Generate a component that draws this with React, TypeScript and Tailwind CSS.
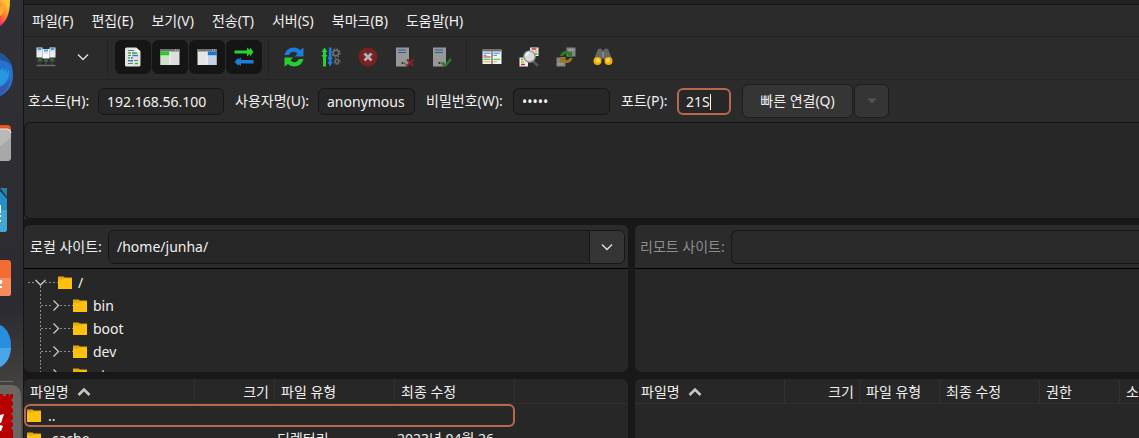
import type { ReactNode } from "react";

const Icon = ({ children, className = "" }: { children: ReactNode; className?: string }) => (
  <svg viewBox="0 0 20 20" aria-hidden="true" className={"h-5 w-5 shrink-0 " + className}>
    {children}
  </svg>
);

const ServerBody = () => (
  <>
    <path d="M1 0.500H14V17l-2 2.500H1z" fill="#979797" />
    <path d="M3 3h8M3 5.500h8" stroke="#2a5f9e" strokeWidth="1.200" />
    <path d="M9 15.500l3 3.500" stroke="#666" strokeWidth="1.500" />
    <circle cx="7.500" cy="16" r="1" fill="#222" />
  </>
);

const SiteManagerIcon = () => (
  <Icon>
    <path d="M0.500 0.500h6v10h-6zM13.500 0.500h6v10h-6z" fill="#e9edf1" />
    <path d="M6.500 2h7v9.500h-7z" fill="#fff" />
    <path d="M1.500 2h4M14.500 2h4M8 3.500h4" stroke="#4b9be0" strokeWidth="1.800" />
    <path d="M1.500 4h3M14.500 4h3M8 6h4" stroke="#b9c4d0" />
    <path d="M4 11v3M10 12v6M16 11v3M1 14h6M8 14h4M13 14h6" stroke="#565656" />
    <path d="M2 12.500h4M8 13.500h4M14 12.500h4" stroke="#2c7c32" strokeWidth="1.500" />
    <path d="M4 14v4M16 14v4" stroke="#444" />
    <path d="M0.500 18.500h19" stroke="#6b6b6b" strokeWidth="1.500" />
  </Icon>
);

const LogIcon = () => (
  <Icon>
    <path d="M4 0.500h9l4.500 4V18a1.500 1.500 0 0 1-1.500 1.500H3.500A1.500 1.500 0 0 1 2 18V2A1.500 1.500 0 0 1 3.500 0.500z" fill="#e4e4e4" />
    <path d="M13 0.500v4h4.500z" fill="#fff" />
    <path d="M5 3.500h6M5 8.500h3M11 13.500h4M5 16.500h5" stroke="#777" strokeWidth="1.200" />
    <path d="M5 6h3M11 6h3M5 11h2M12 16.500h3" stroke="#23c52a" strokeWidth="1.500" />
    <path d="M9 6h2M9.500 8.500H15M5 13.800h5M8 11h2" stroke="#397fc0" strokeWidth="1.500" />
  </Icon>
);

const LocalTreeIcon = () => (
  <Icon>
    <path d="M0.500 2h19v16H0.500z" fill="#ddd" />
    <path d="M0.500 2h19v2.500H0.500z" fill="#737373" />
    <path d="M17 2.500h1v1h-1zM15 2.500h1v1h-1z" fill="#ccc" />
    <path d="M0.500 4.500h9v4h-9z" fill="#24cd2b" />
    <path d="M0.500 8.500h9V18h-9z" fill="#cce3ca" />
    <path d="M10 4.500V18" stroke="#f5f5f5" />
  </Icon>
);

const RemoteTreeIcon = () => (
  <Icon>
    <path d="M0.500 2h19v16H0.500z" fill="#e5e5e5" />
    <path d="M0.500 2h19v2.500H0.500z" fill="#737373" />
    <path d="M17 2.500h1v1h-1zM15 2.500h1v1h-1z" fill="#ccc" />
    <path d="M10.500 4.500h9v4h-9z" fill="#1976d2" />
    <path d="M10.500 8.500h9V18h-9z" fill="#c4d3e3" />
    <path d="M10 4.500V18" stroke="#f7f7f7" />
  </Icon>
);

const QueueIcon = () => (
  <Icon>
    <path d="M0.500 3.500H13V0.500L16 3V0.500L19.500 5 16 9.300V7l-3 2.300V6.500H0.500z" fill="#27d32f" />
    <path d="M19.500 13H7v-2.500L4.500 12.500V10.500L0.500 15l4 4v-2l2.500 2v-2.500h12.500z" fill="#1b7ddc" />
  </Icon>
);

const RefreshIcon = () => (
  <Icon>
    <path d="M0.500 8C1.500 3.500 5 0.500 9.800 0.500c2.700 0 4.600 0.900 6.200 2.500l3.500-2.500V9.500H11l2.500-3C10.500 3.700 6.500 4.500 5 8z" fill="#1b7ddc" />
    <path d="M19.500 12c-1 4.500-4.500 7.500-9.300 7.500-2.700 0-4.600-0.900-6.200-2.500L0.500 19.500v-9H9l-2.500 3c3 2.800 7 2 8.500-1.500z" fill="#27cf2e" />
  </Icon>
);

const ProcessIcon = () => (
  <Icon>
    <path d="M3.500 0.500L6.500 5H5v3h1.500L5 10.500v9H2v-9L0.500 8H2V5H0.500z" fill="#27d32f" />
    <path d="M9 19.500L6.500 15h1.300v-3H6.500L7.800 9V0.500h2.700V9l1.300 3h-1.300v3h1.300z" fill="#1b7ddc" />
    <circle cx="15" cy="6" r="2.700" fill="none" stroke="#707070" strokeWidth="1.500" />
    <circle cx="15" cy="6" r="4" fill="none" stroke="#707070" strokeWidth="1.500" strokeDasharray="1.500 1.640" />
    <circle cx="16" cy="14.500" r="1.800" fill="none" stroke="#707070" strokeWidth="1.300" />
    <circle cx="16" cy="14.500" r="2.900" fill="none" stroke="#707070" strokeWidth="1.200" strokeDasharray="1.140 1.140" />
  </Icon>
);

const CancelIcon = () => (
  <Icon>
    <circle cx="10" cy="10" r="9.500" fill="#782224" />
    <path d="M6.500 6.500l7 7M13.500 6.500l-7 7" stroke="#b8b0b0" strokeWidth="2.800" />
  </Icon>
);

const DisconnectIcon = () => (
  <Icon>
    <ServerBody />
    <path d="M12 12.500l6.500 6.500M18.500 12.500L12 19" stroke="#852428" strokeWidth="2.200" />
  </Icon>
);

const ReconnectIcon = () => (
  <Icon>
    <ServerBody />
    <path d="M10.500 15.500l3 3L19 12" fill="none" stroke="#287f2d" strokeWidth="2.400" />
  </Icon>
);

const FilterIcon = () => (
  <Icon>
    <path d="M0.500 3h19v14H0.500z" fill="#f4f4f4" />
    <path d="M0.500 2h19v2.500H0.500z" fill="#727272" />
    <path d="M1.500 6.200h7M11.500 6.200H18M1.500 8.300h3M11.500 8.300H15" stroke="#348bd9" />
    <path d="M1.500 10h7" stroke="#c52332" />
    <path d="M1.500 12.300h7M11.500 12.300H18" stroke="#28c733" />
    <path d="M1.500 14.800h7M11.500 14.800H15" stroke="#e5ad22" />
    <path d="M10 4.500V17" stroke="#555" strokeWidth="1.200" />
  </Icon>
);

const SearchFilesIcon = () => (
  <Icon>
    <path d="M11 0.500h8.500V9H11zM0.500 10.500H9v9H0.500z" fill="#f2f2f2" />
    <path d="M12.500 2h5M2 17.500h4" stroke="#d12d37" strokeWidth="1.300" />
    <path d="M16 4.500h2.500M2 15h3" stroke="#e7a728" strokeWidth="1.300" />
    <path d="M16 7h2.500M2 12.500h2" stroke="#36b93c" strokeWidth="1.300" />
    <path d="M14 14l5 5" stroke="#555" strokeWidth="2.500" />
    <circle cx="10.500" cy="9.500" r="5.700" fill="#d9d9d9" stroke="#8e8e8e" strokeWidth="1.300" />
    <path d="M7 9a4 4 0 0 1 3-3.500" fill="none" stroke="#fafafa" strokeWidth="1.500" />
  </Icon>
);

const SyncBrowseIcon = () => (
  <Icon>
    <path d="M10.500 0.500h9v9h-9zM0.500 10.500h9v9h-9z" fill="#858585" />
    <path d="M12 3h6M2 17h5" stroke="#aaa" />
    <path d="M4 9c0.500-3 3-5 6-5 1.800 0 3 0.600 4.200 1.600L16 4v6h-5.500l1.800-2C10 6.200 7.800 7 7 9z" fill="#287c2c" />
    <path d="M16.500 11c-0.500 3-3 5-6 5-1.800 0-3-0.600-4.200-1.600L4 16v-6h6l-1.800 2c2.300 1.800 4.500 1 5.300-1z" fill="#9b7420" />
  </Icon>
);

const BinocularsIcon = () => (
  <Icon>
    <path d="M5 2l3-0.500 1.500 2h1L12 1.500l3 0.500 4 10-5 5-3-5H9l-3 5-5-5z" fill="#666" />
    <path d="M9 5h2v5H9z" fill="#858585" />
    <circle cx="4.500" cy="14" r="4" fill="#f6ad0b" />
    <circle cx="15.500" cy="14" r="4" fill="#f6ad0b" />
    <circle cx="5" cy="13.500" r="2" fill="#ffdc65" />
    <circle cx="15" cy="13.500" r="2" fill="#ffdc65" />
  </Icon>
);

const ChevronDown = () => (
  <svg viewBox="0 0 12 8" className="h-2 w-3 shrink-0" aria-hidden="true">
    <path d="M1 1.500l5 5 5-5" fill="none" stroke="#e3e3e3" strokeWidth="1.300" />
  </svg>
);

const SortUp = () => (
  <svg viewBox="0 0 14 10" className="h-[10px] w-[14px] shrink-0" aria-hidden="true">
    <path d="M1.500 8L7 2.500 12.500 8" fill="none" stroke="#c6c6c6" strokeWidth="2.600" />
  </svg>
);

const FolderIcon = () => (
  <svg viewBox="0 0 14 14" className="h-[14px] w-[14px] shrink-0" aria-hidden="true">
    <path d="M0 0.500h5.500L7 1.500h7v6H0z" fill="#e5a50f" />
    <path d="M0 3.500h5.500L7 2.500h7v10.500H0z" fill="#ffc10d" />
  </svg>
);

type Tool = { label: string; icon: ReactNode; pressed?: boolean; disabled?: boolean };

const toolGroups: Tool[][] = [
  [
    { label: "사이트 관리자", icon: <SiteManagerIcon /> },
    { label: "사이트 목록", icon: <ChevronDown /> },
  ],
  [
    { label: "메시지 로그", icon: <LogIcon />, pressed: true },
    { label: "로컬 디렉터리 트리", icon: <LocalTreeIcon />, pressed: true },
    { label: "원격 디렉터리 트리", icon: <RemoteTreeIcon />, pressed: true },
    { label: "전송 대기열", icon: <QueueIcon />, pressed: true },
  ],
  [
    { label: "새로 고침", icon: <RefreshIcon /> },
    { label: "대기열 처리", icon: <ProcessIcon /> },
    { label: "취소", icon: <CancelIcon />, disabled: true },
    { label: "연결 끊기", icon: <DisconnectIcon />, disabled: true },
    { label: "다시 연결", icon: <ReconnectIcon />, disabled: true },
  ],
  [
    { label: "필터", icon: <FilterIcon /> },
    { label: "디렉터리 비교", icon: <SearchFilesIcon /> },
    { label: "동기화 탐색", icon: <SyncBrowseIcon />, disabled: true },
    { label: "파일 검색", icon: <BinocularsIcon /> },
  ],
];

const menus = ["파일(F)", "편집(E)", "보기(V)", "전송(T)", "서버(S)", "북마크(B)", "도움말(H)"];

const DockItem = ({ label, children }: { label: string; children: ReactNode }) => (
  <button aria-label={label} className="block h-[68px] w-full shrink-0">
    <svg viewBox="0 0 23 68" className="h-[68px] w-[23px]" aria-hidden="true">
      {children}
    </svg>
  </button>
);

const Dock = () => (
  <nav aria-label="Dock" className="flex w-[23px] shrink-0 flex-col overflow-hidden bg-linear-to-b from-[#303035] via-[#2b2b30] via-70% to-[#57504b]">
    <div className="-mt-[27px] flex flex-col">
      <DockItem label="Firefox">
        <defs>
          <linearGradient id="fox" x1="0.300" y1="0" x2="0" y2="1">
            <stop offset="0.400" stopColor="#ffc42f" />
            <stop offset="0.750" stopColor="#ff6b32" />
            <stop offset="1" stopColor="#ee2778" />
          </linearGradient>
        </defs>
        <path d="M0 4h5c4 6 5 14 5 24 0 13-4 21-10 25z" fill="url(#fox)" />
        <path d="M0 34c2 0 4-2 5-5 0 9-2 13-5 14z" fill="#ffa832" />
      </DockItem>
      <DockItem label="Thunderbird">
        <path d="M0 12c8 3 13 11 13 22S8 51 0 55z" fill="#2771ce" />
        <path d="M0 12c5 2 9 6 11 12-4-4-7-4-11-5z" fill="#1e5799" />
        <path d="M0 29l3-2 1 4 2-4 1 5 2-4c1 8-2 13-9 18z" fill="#2598df" />
        <path d="M0 46c4-1 8-5 10-9-1 8-4 13-10 17z" fill="#355aaf" />
      </DockItem>
      <DockItem label="파일">
        <path d="M0 16h7q4 0 4 4v15H0z" fill="#e65326" />
        <path d="M0 20h7q4 0 4 4v24q0 4-4 4H0z" fill="#b9b9b9" />
        <path d="M0 37L11 29v19q0 4-4 4H0z" fill="#a8a8a8" />
        <path d="M0 20h7q4 0 4 4" fill="none" stroke="#e8e8e8" />
      </DockItem>
      <DockItem label="LibreOffice">
        <path d="M0 11h7v9z" fill="#2382ad" />
        <path d="M0 13l7 8v31q0 3-3 3H0z" fill="#2491c4" />
        <path d="M0 33h7v19q0 3-3 3H0z" fill="#43a7d3" />
        <path d="M0 28h1v8H0zM0 38h1v2H0zM0 43h1v2H0z" fill="#fff" />
        <path d="M0 13l7 8" stroke="#204557" strokeWidth="1.500" />
      </DockItem>
      <DockItem label="Ubuntu Software">
        <path d="M0 15h8q3 0 3 3v30q0 3-3 3H0z" fill="#f46c31" />
        <path d="M0 33h11v15q0 3-3 3H0z" fill="#f88b5c" />
        <path d="M0 35h2q1 1 0 3l-1 1H0M0 41h2v2H0z" fill="#fff" />
      </DockItem>
      <DockItem label="도움말">
        <path d="M0 12c7 3 11 11 11 21S7 51 0 54z" fill="#278ddf" />
        <path d="M0 35h11c-1 9-4 15-11 19z" fill="#49a5e8" />
      </DockItem>
      <DockItem label="FileZilla">
        <path d="M0 0.500h13" stroke="#746a65" />
        <path d="M0 4h11q10 0 10 12v52H0z" fill="#6a6664" />
        <path d="M0 13h3v2h3v-2h3v2l2-2h2v4l-2 2 2 2v3l-2 2 2 2v3l-2 2 2 2v3l-2 2 2 2v3l-2 2 2 2v16H0z" fill="#b60000" />
        <path d="M0 34l4-1-3 9H0zM0 44l3 1-2 5H0z" fill="#fff" />
      </DockItem>
    </div>
  </nav>
);

const fieldClass =
  "h-[27px] rounded-md border border-[#171717] bg-[#272727] px-2 text-sm text-[#f2f2f2] outline-none";

const Field = ({ id, label, labelClass, children }: { id: string; label: string; labelClass: string; children: ReactNode }) => (
  <div className="flex shrink-0 items-center">
    <label htmlFor={id} className={"whitespace-nowrap " + labelClass}>
      {label}
    </label>
    {children}
  </div>
);

const QuickConnect = () => (
  <form className="flex h-[43px] shrink-0 items-center gap-[11px] border-t border-[#252525] pl-1" onSubmit={(e) => e.preventDefault()}>
    <Field id="host" label="호스트(H):" labelClass="w-[70px]">
      <input id="host" defaultValue="192.168.56.100" className={fieldClass + " w-[126px]"} />
    </Field>
    <Field id="user" label="사용자명(U):" labelClass="w-[83px]">
      <input id="user" defaultValue="anonymous" className={fieldClass + " w-[97px]"} />
    </Field>
    <Field id="pass" label="비밀번호(W):" labelClass="w-[87px]">
      <input id="pass" type="password" defaultValue="guest" className={fieldClass + " w-[97px]"} />
    </Field>
    <Field id="port" label="포트(P):" labelClass="w-[56px]">
      <div className="relative">
        <input id="port" defaultValue="21S" className="h-[27px] w-[54px] rounded-md border-2 border-[#b5694f] bg-[#272727] px-[7px] text-sm text-[#f2f2f2] outline-none" />
        <span className="absolute top-[6px] left-[33px] h-4 w-px bg-white" />
      </div>
    </Field>
    <div className="flex shrink-0 gap-px">
      <button className="h-[34px] w-[111px] rounded-md border border-[#1d1d1d] bg-[#353535]">빠른 연결(Q)</button>
      <button aria-label="최근 연결" disabled className="flex h-[34px] w-[35px] items-center justify-center rounded-md border border-[#1d1d1d] bg-[#353535]">
        <svg viewBox="0 0 10 6" className="h-[6px] w-[10px]" aria-hidden="true">
          <path d="M0.500 0.500h9L5 5.500z" fill="#555" />
        </svg>
      </button>
    </div>
  </form>
);

const TreeRow = ({ name, root = false }: { name: string; root?: boolean }) => (
  <li className="flex h-[23px] items-center">
    <svg viewBox="0 0 50 23" className={root ? "h-[23px] w-[34px] shrink-0" : "h-[23px] w-[49px] shrink-0"} preserveAspectRatio="xMinYMid slice" aria-hidden="true">
      {root ? (
        <>
          <path d="M4 11.500h8M21 11.500h13M16.500 15v8" stroke="#8c8c8c" strokeDasharray="2 2" />
          <path d="M11.500 9l5 5 5-5" fill="none" stroke="#ccc" strokeWidth="1.300" />
        </>
      ) : (
        <>
          <path d="M16.500 0v23M17 11.500h12M36 11.500h13" stroke="#8c8c8c" strokeDasharray="2 2" />
          <path d="M29.500 6.500l5 5-5 5" fill="none" stroke="#ccc" strokeWidth="1.300" />
        </>
      )}
    </svg>
    <FolderIcon />
    <span className="pl-[6px]">{name}</span>
  </li>
);

type Column = { name: string; width: string; right?: boolean; sorted?: boolean };

const localColumns: Column[] = [
  { name: "파일명", width: "w-[171px]", sorted: true },
  { name: "크기", width: "w-[80px]", right: true },
  { name: "파일 유형", width: "w-[120px]" },
  { name: "최종 수정", width: "w-[120px]" },
];

const remoteColumns: Column[] = [
  { name: "파일명", width: "w-[150px]", sorted: true },
  { name: "크기", width: "w-[75px]", right: true },
  { name: "파일 유형", width: "w-[80px]" },
  { name: "최종 수정", width: "w-[100px]" },
  { name: "권한", width: "w-[80px]" },
  { name: "소유자/그룹", width: "w-[100px]" },
];

const HeaderRow = ({ columns }: { columns: Column[] }) => (
  <thead>
    <tr className="h-[25px]">
      {columns.map((c) => (
        <th key={c.name} className={"border-r border-b border-[#303030] pt-[2px] pr-[5px] pl-[6px] font-normal whitespace-nowrap " + c.width + (c.right ? " text-right" : " text-left")}>
          <span className="inline-flex items-center gap-2">
            {c.name}
            {c.sorted && <SortUp />}
          </span>
        </th>
      ))}
      <th className="border-b border-[#303030]" />
    </tr>
  </thead>
);

const LocalPane = () => (
  <div className="grid min-h-0 min-w-0 grid-rows-[147px_1fr] gap-[7px]">
    <section className="flex min-h-0 flex-col overflow-hidden rounded-md bg-[#272727]">
      <div className="flex h-11 shrink-0 items-center border-b border-black bg-[#2b2b2b] pr-[3px] pl-[6px]">
        <label htmlFor="local" className="w-[78px] shrink-0 whitespace-nowrap">로컬 사이트:</label>
        <div className="flex h-[34px] min-w-0 flex-1 overflow-hidden rounded-md border border-[#171717]">
          <input id="local" defaultValue="/home/junha/" className="min-w-0 flex-1 bg-[#272727] px-2 outline-none" />
          <button aria-label="경로 목록" className="flex w-[35px] items-center justify-center border-l border-[#171717] bg-[#353535]">
            <ChevronDown />
          </button>
        </div>
      </div>
      <ul className="min-h-0 flex-1 overflow-hidden pt-[2px]">
        <TreeRow name="/" root />
        <TreeRow name="bin" />
        <TreeRow name="boot" />
        <TreeRow name="dev" />
        <TreeRow name="etc" />
      </ul>
    </section>
    <section className="min-h-0 overflow-hidden rounded-t-md bg-[#272727]">
      <table className="w-full table-fixed border-separate border-spacing-0">
        <HeaderRow columns={localColumns} />
        <tbody>
          <tr className="h-[23px]">
            <td className="rounded-l-md border-y-2 border-l-2 border-[#b5694f] p-0">
              <span className="flex items-center gap-[7px] pl-px leading-[18px]">
                <FolderIcon />
                ..
              </span>
            </td>
            <td className="border-y-2 border-[#b5694f] p-0" />
            <td className="border-y-2 border-[#b5694f] p-0" />
            <td className="rounded-r-md border-y-2 border-r-2 border-[#b5694f] p-0" />
            <td />
          </tr>
          <tr className="h-[23px]">
            <td className="p-0">
              <span className="flex items-center gap-[7px] pl-[3px]">
                <FolderIcon />
                .cache
              </span>
            </td>
            <td />
            <td className="p-0 pl-[2px]">디렉터리</td>
            <td className="p-0 pl-[2px] whitespace-nowrap">2023년 04월 26</td>
            <td />
          </tr>
        </tbody>
      </table>
    </section>
  </div>
);

const RemotePane = () => (
  <div className="grid min-h-0 min-w-0 grid-rows-[147px_1fr] gap-[7px]">
    <section className="flex min-h-0 flex-col overflow-hidden rounded-l-md bg-[#272727]">
      <div className="flex h-11 shrink-0 items-center border-b border-black bg-[#2b2b2b] pl-[5px]">
        <label htmlFor="remote" className="w-[91px] shrink-0 whitespace-nowrap text-[#8d8d8d]">리모트 사이트:</label>
        <input id="remote" disabled className="h-[34px] min-w-0 flex-1 rounded-l-md border border-r-0 border-[#171717] bg-[#2a2a2a]" />
      </div>
    </section>
    <section className="min-h-0 overflow-hidden rounded-tl-md bg-[#272727]">
      <table className="w-[585px] table-fixed border-separate border-spacing-0">
        <HeaderRow columns={remoteColumns} />
      </table>
    </section>
  </div>
);

export default function App() {
  return (
    <div className="flex h-screen overflow-hidden bg-[#181818] text-sm text-[#f0f0f0] [font-family:'Noto_Sans','Noto_Sans_CJK_KR',sans-serif]">
      <Dock />
      <main className="flex min-w-0 flex-1 flex-col border-l border-[#141414] bg-[#181818]">
        <header className="shrink-0 bg-[#2b2b2b]">
          <div className="h-[5px] border-b border-[#151515] bg-[#222]" />
          <nav aria-label="메뉴" className="flex h-[31px] items-center gap-[18px] pl-2">
            {menus.map((m) => (
              <button key={m} className="whitespace-nowrap">
                {m}
              </button>
            ))}
          </nav>
          <div role="toolbar" className="flex h-[43px] items-center border-t border-[#252525] pb-[2px] pl-1">
            {toolGroups.map((group, i) => (
              <div key={i} className={"flex gap-px " + (i > 0 ? "ml-[6px] border-l border-[#222] pl-[7px]" : "")}>
                {group.map((t) => (
                  <button
                    key={t.label}
                    aria-label={t.label}
                    aria-pressed={t.pressed}
                    disabled={t.disabled}
                    className={"flex h-[34px] w-9 items-center justify-center rounded-md " + (t.pressed ? "bg-[#151515]" : "")}
                  >
                    {t.icon}
                  </button>
                ))}
              </div>
            ))}
          </div>
          <QuickConnect />
        </header>
        <section aria-label="로그" className="bg-[#2b2b2b]">
          <div className="h-[97px] rounded-l-md border border-r-0 border-[#151515] bg-[#272727]" />
        </section>
        <div className="mt-[6px] grid min-h-0 flex-1 grid-cols-[604fr_504fr] gap-[7px]">
          <LocalPane />
          <RemotePane />
        </div>
      </main>
    </div>
  );
}
